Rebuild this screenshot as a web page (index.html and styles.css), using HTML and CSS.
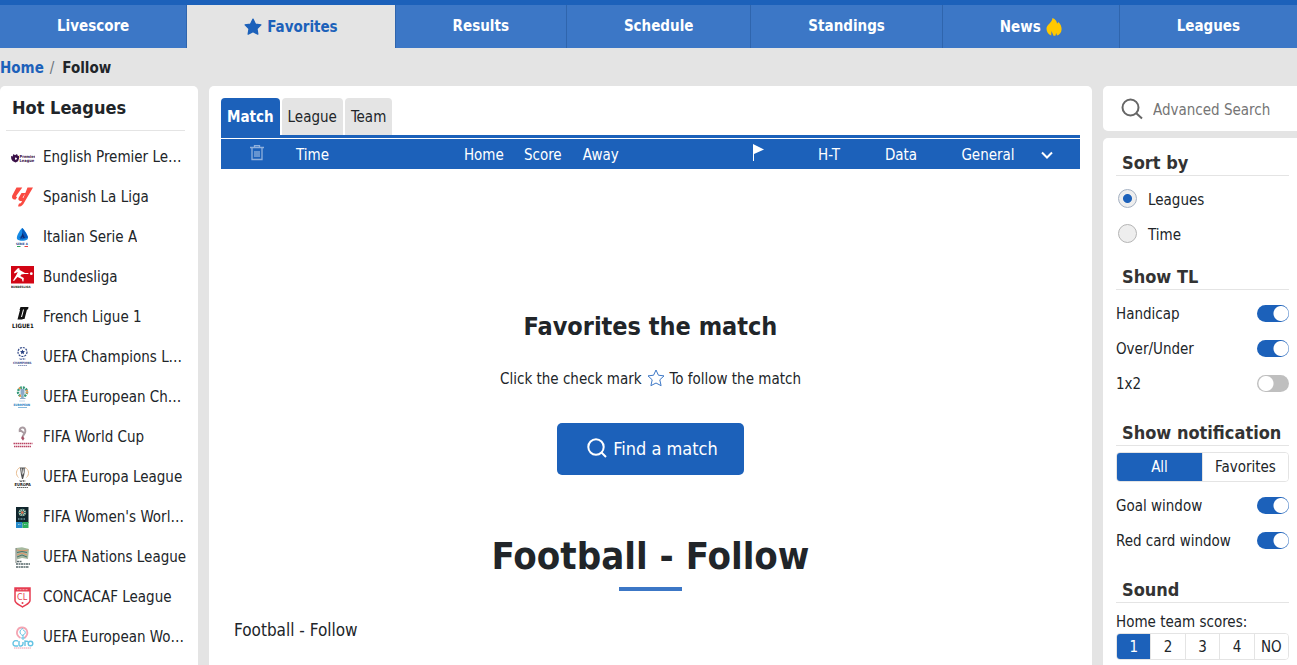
FILE: index.html
```
<!DOCTYPE html>
<html lang="en">
<head>
  <meta charset="UTF-8" />
  <meta name="viewport" content="width=device-width, initial-scale=1" />
  <title>Football - Follow</title>
  <link rel="stylesheet" href="styles.css">
</head>
<body>
  <nav class="main-nav">
    <a href="#">Livescore</a>
    <a href="#" class="active">
      <svg class="nav-star" viewBox="0 0 20 20"><path d="M10 1.2l2.7 5.5 6.1.9-4.4 4.3 1 6.1L10 15.2 4.6 18l1-6.1L1.2 7.6l6.1-.9z" fill="#1c61ba" stroke="#1c61ba" stroke-width="1.4" stroke-linejoin="round"/></svg>
      Favorites
    </a>
    <a href="#">Results</a>
    <a href="#">Schedule</a>
    <a href="#">Standings</a>
    <a href="#" class="news">
      News
      <svg class="nav-fire" viewBox="0 0 16 20"><path d="M6.500 1C9.500 2 11 4.500 11 6.500c.6-.3 1-.8 1.200-1.500 2.400 2 3.400 4.500 3.400 7 0 3.500-2 5.800-4.600 6.500l-.8-2.500-.8 2.800H7.500L5.500 14l-.3 4.500C2.500 17.500.5 15 .5 11.800.5 7.500 6 6 6.500 1z" fill="#ffc800"/></svg>
    </a>
    <a href="#">Leagues</a>
  </nav>

  <div class="breadcrumb">
    <a href="#">Home</a><span class="slash">/</span><span class="current">Follow</span>
  </div>

  <div class="layout">
    <aside class="leagues">
      <h2>Hot Leagues</h2>
      <ul>
        <li><a href="#">
          <svg viewBox="0 0 24 24"><path d="M0 11l1.500.5L2.500 9 4 10.300 6 9l.8 1.700 1.200.3v2.500l-1 2.700-2.500 1.200-3-1.500L.3 14z" fill="#3a1048"/><path d="M4 12.500l2 .5-.5 1.500-1.500.3z" fill="#fff"/><text x="8.500" y="13" font-size="4" font-weight="bold" fill="#3a1048">Premier</text><text x="8.500" y="16.500" font-size="4" font-weight="bold" fill="#3a1048">League</text></svg>
          <span>English Premier League</span></a></li>
        <li><a href="#">
          <svg viewBox="0 0 24 24"><path d="M5.500 2.500h5.800L5.500 10.500c-.6.900-.2 1.600.7 1.600L4.700 14.500C1.500 14.800.3 12.500 1.500 10z" fill="#fa4b42"/><path d="M16.500 2.500H22L13.500 17c-1.800 3.500-3.500 5-6.500 4.200l1-2.700c1 .3 1.800 0 2.300-1l.8-1.500c-2.600.5-4.600-1-3.300-3.500L10.500 8h4l-2.700 4.200c-.4.800.3 1.200.8.400z" fill="#fa4b42"/></svg>
          <span>Spanish La Liga</span></a></li>
        <li><a href="#">
          <svg viewBox="0 0 24 24"><path d="M11.300 3C13 4 16.500 9.500 17 12c.3 2-1 3.200-3 3.500-2 .3-4 .3-6-.3-2-.6-2.500-1.700-2-3.500C6.500 9.500 9.500 4 11.300 3z" fill="#168be5"/><path d="M11.300 3c1.800 2 5 7 5.700 9.500l-6 2-3-2.500 3-1z" fill="#0758bd"/><path d="M11.500 8l2.500 5h-1.700l-.8-1.500-2.500 3.500z" fill="#0e2b70"/><text x="5" y="19.500" font-size="3" font-weight="bold" fill="#153d86">SERIE A</text><path d="M6 21h3.500v1H6z" fill="#2ea35a"/><path d="M13.500 21H17v1h-3.500z" fill="#e44545"/></svg>
          <span>Italian Serie A</span></a></li>
        <li><a href="#">
          <svg viewBox="0 0 24 24"><path d="M0 1h23v17.500H0z" fill="#d20515"/><path d="M6.500 3.500l1.700-.5.500 2 5.300 3h3.500l-.2 1h-4l-3 .5-1 1.500 3.500 2-.3 3.500h-1l-.6-2.500L6.500 12 3 16l-1-.6L5.300 10l1.500-3-3.300 1.500L3 7.300z" fill="#fff"/><circle cx="20.300" cy="8.700" r="1.400" fill="#fff"/><text x="0" y="22.500" font-size="3" font-weight="bold" fill="#222">BUNDESLIGA</text></svg>
          <span>Bundesliga</span></a></li>
        <li><a href="#">
          <svg viewBox="0 0 24 24"><path d="M9.500 2h8L17 4.500h-1L13.500 14h-3L13 4.500h-1L10 12h2l-.5 2.500H6.500L9 5H8.500z" fill="#111"/><text x="1" y="22.500" font-size="6" font-weight="bold" fill="#111">LIGUE1</text></svg>
          <span>French Ligue 1</span></a></li>
        <li><a href="#">
          <svg viewBox="0 0 24 24"><circle cx="11.500" cy="7" r="4.500" fill="#fff" stroke="#314887" stroke-width="1.200" stroke-dasharray="2 1"/><path d="M11.500 4.500l.7 1.600 1.800.2-1.300 1.200.3 1.700-1.500-.9-1.500.9.300-1.700L9 6.300l1.800-.2z" fill="#263f80"/><path d="M9 13v1.500h2V13m1.500 0v2m0-1h2" stroke="#7f8eb8" fill="none"/><text x="2" y="19" font-size="3" font-weight="bold" fill="#314887">CHAMPIONS</text><path d="M7 20.500h9" stroke="#8b98bd" stroke-dasharray="1.500 .5"/></svg>
          <span>UEFA Champions League</span></a></li>
        <li><a href="#">
          <svg viewBox="0 0 24 24"><ellipse cx="11.500" cy="7" rx="4.500" ry="4.500" fill="none" stroke="#339979" stroke-width="2.400" stroke-dasharray="2 1"/><ellipse cx="11.500" cy="7" rx="4.500" ry="4.500" fill="none" stroke="#ef9750" stroke-width="2.400" stroke-dasharray="1.500 7"/><path d="M9.500 4h4v5l-1 1v3h2v1H9v-1h1.500v-3l-1-1z" fill="#8ca9c7"/><path d="M8.500 16h6" stroke="#86add3" stroke-dasharray="1 1"/><text x="2.500" y="20.500" font-size="3" font-weight="bold" fill="#1677bd">EUROPEAN</text><path d="M7 22.500h9" stroke="#88b9dd"/></svg>
          <span>UEFA European Championship</span></a></li>
        <li><a href="#">
          <svg viewBox="0 0 24 24"><path d="M8.800 7C7.500 1 15 1 14.300 6.500c-.3 2-2.300 3.500-2.800 5.500M9 5l4 3" fill="none" stroke="#a99ba1" stroke-width="2"/><path d="M10 13l1.500-2 2 2.300-1.500 2.500z" fill="#a55166"/><path d="M2.500 18.500h19M3 21.500h17" stroke="#ba4563" stroke-width="1.700" stroke-dasharray="1.500 .5"/></svg>
          <span>FIFA World Cup</span></a></li>
        <li><a href="#">
          <svg viewBox="0 0 24 24"><path d="M9 2.500a6 6 0 0 0-1.500 10M14 2.500a6 6 0 0 1 1.500 10" fill="none" stroke="#e8bd91"/><path d="M9 2.500h5.300L13.200 10 12 14h-1L10 10z" fill="#555"/><path d="M10.500 3.500l1 6M13 3.500l-.7 5" stroke="#ddd"/><path d="M9 15v1.500h2V15m1.500 0v2m0-1h2" stroke="#777" fill="none"/><text x="3.500" y="20.500" font-size="4" font-weight="bold" fill="#222">EUROPA</text><path d="M6 22.500h11" stroke="#666" stroke-dasharray="1.500 .5"/></svg>
          <span>UEFA Europa League</span></a></li>
        <li><a href="#">
          <svg viewBox="0 0 24 24"><path d="M5 2h12.500v16H5z" fill="#10252c"/><path d="M5 17h6.500v6H5z" fill="#268bcb"/><path d="M11.500 17h6v6h-6z" fill="#2cb05c"/><circle cx="11.300" cy="7.500" r="3.600" fill="#b9c9ae"/><path d="M11.300 3.500v8M7.300 7.500h8M8.700 5l5.300 5.200M14 5l-5.300 5.200" stroke="#29666a"/><circle cx="11.300" cy="7.500" r="1.300" fill="#ef7150"/><path d="M7 14h7M7 19.500h3M13 19.500h3" stroke="#9acbd0" stroke-dasharray="1 .5"/></svg>
          <span>FIFA Women's World Cup</span></a></li>
        <li><a href="#">
          <svg viewBox="0 0 24 24"><path d="M5 3l6-.7L18 4l-1 10-6-1-5 1.500z" fill="#a6b99f"/><path d="M6 5l5 1 6-1M6 10l5-2 5 2" stroke="#e59368" fill="none"/><path d="M6 7.500l5-1 5 1M6 12l5-2 5 2" stroke="#47716c" fill="none"/><path d="M5 3v15" stroke="#787e76"/><path d="M6 16.500h5M5 19h14M5 22h13" stroke="#57686b" stroke-width="1.500" stroke-dasharray="2 .5"/></svg>
          <span>UEFA Nations League</span></a></li>
        <li><a href="#">
          <svg viewBox="0 0 24 24"><path d="M4 3h15v12.500c0 3-4 4-7.500 6.500C8 19.500 4 18.500 4 15.500z" fill="#fff" stroke="#e63d51" stroke-width="1.500"/><path d="M4 3h15v3.500H4z" fill="#e63d51"/><path d="M6 4.700h11" stroke="#f7aeb6" stroke-dasharray="1 .5"/><text x="6" y="14.500" font-size="9" fill="#e63d51">CL</text><circle cx="11.500" cy="18" r="1" fill="#e63d51"/></svg>
          <span>CONCACAF League</span></a></li>
        <li><a href="#">
          <svg viewBox="0 0 24 24"><path d="M9.500 13C3 9 6.500 2.500 11 2.500S19 8 13.500 13" fill="none" stroke="#f4a5b2" stroke-width="1.800"/><path d="M12 3.500c-4 1-4 6 0 7M12 5c3 1 3 4 0 5M10 13h4M12 10v5" fill="none" stroke="#63bfe0"/><path d="M7 16c-6-2-6 5-3 5h3M8 16v4c0 2 4 1 4-1v-2M14 21v-5l3 .5" fill="none" stroke="#65c3e3" stroke-width="1.400"/><circle cx="19.500" cy="18.500" r="2.300" fill="none" stroke="#65c3e3" stroke-width="1.400"/><path d="M3 23h17" stroke="#ee9cac" stroke-dasharray="1.500 .5"/></svg>
          <span>UEFA European Women's Championship</span></a></li>
      </ul>
    </aside>

    <main class="content">
      <div class="tabs">
        <button class="active">Match</button>
        <button>League</button>
        <button>Team</button>
      </div>
      <table class="match-head">
        <thead>
          <tr>
            <th class="col-del"><svg width="16" height="16" viewBox="0 0 16 16"><path d="M1 2.500h14M5.500 2V.6h5V2M3 2.500v12h10v-12M6 6v6M8 6v6M10 6v6" fill="none" stroke="#8fb0dc" stroke-width="1.300"/></svg></th>
            <th class="col-time">Time</th>
            <th class="col-home">Home</th>
            <th class="col-score">Score</th>
            <th class="col-away">Away</th>
            <th class="col-corner"><svg width="12" height="18" viewBox="0 0 12 18"><path d="M1 0l11 5.500L2 10v7H1z" fill="#fff"/></svg></th>
            <th class="col-ht">H-T</th>
            <th class="col-data">Data</th>
            <th class="col-general">General</th>
            <th class="col-more"><svg width="14" height="10" viewBox="0 0 14 10"><path d="M2 2.500l5 5 5-5" fill="none" stroke="#fff" stroke-width="2"/></svg></th>
          </tr>
        </thead>
      </table>

      <section class="empty">
        <h2>Favorites the match</h2>
        <p>Click the check mark
          <svg width="18" height="20" viewBox="0 0 18 20"><path d="M9 1l2.400 5.200 5.600.7-4.200 3.900 1.300 5.900L9 14l-5.100 2.700 1.300-5.900L1 6.900l5.600-.7z" fill="none" stroke="#3c77c6" stroke-width="1" stroke-linejoin="round"/></svg>
          To follow the match</p>
        <button class="find">
          <svg width="20" height="22" viewBox="0 0 20 22"><circle cx="9" cy="9" r="7.700" fill="none" stroke="#fff" stroke-width="2"/><path d="M14.500 14.500l4.500 4.500" stroke="#fff" stroke-width="2"/></svg>
          Find a match
        </button>
      </section>

      <section class="about">
        <h1>Football - Follow</h1>
        <p>Football - Follow</p>
      </section>
    </main>

    <aside class="side">
      <label class="search">
        <svg width="22" height="22" viewBox="0 0 22 22"><circle cx="9.500" cy="9.500" r="8" fill="none" stroke="#666" stroke-width="2"/><path d="M15 15l6 5.500" stroke="#666" stroke-width="2"/></svg>
        <input type="text" placeholder="Advanced Search" aria-label="Advanced Search" />
      </label>

      <div class="settings">
        <h3>Sort by</h3>
        <label class="radio"><input type="radio" name="sort" checked />Leagues</label>
        <label class="radio"><input type="radio" name="sort" />Time</label>

        <h3>Show TL</h3>
        <label class="switch">Handicap<input type="checkbox" checked /></label>
        <label class="switch">Over/Under<input type="checkbox" checked /></label>
        <label class="switch">1x2<input type="checkbox" /></label>

        <h3 class="wide">Show notification</h3>
        <div class="group">
          <button class="on">All</button>
          <button>Favorites</button>
        </div>
        <label class="switch">Goal window<input type="checkbox" checked /></label>
        <label class="switch">Red card window<input type="checkbox" checked /></label>

        <h3 class="wide">Sound</h3>
        <p class="sound-label">Home team scores:</p>
        <div class="group small">
          <button class="on">1</button>
          <button>2</button>
          <button>3</button>
          <button>4</button>
          <button>NO</button>
        </div>
      </div>
    </aside>
  </div>
</body>
</html>
```
FILE: styles.css
```
* {
  box-sizing: border-box;
}
body {
  margin: 0;
  background: #e4e4e4;
  color: #212529;
  font-family: Tahoma, "DejaVu Sans Condensed", "Noto Sans", sans-serif;
  font-size: 15px;
  line-height: 20px;
}
a {
  color: inherit;
  text-decoration: none;
}
button,
input {
  font: inherit;
  color: inherit;
}
h1, h2, h3, p, ul {
  margin: 0;
  padding: 0;
}

/* top menu */
.main-nav {
  display: flex;
  height: 48px;
  border-top: 5px solid #1c61ba;
  background: #3c77c6;
}
.main-nav a {
  flex: 1 1 auto;
  display: flex;
  align-items: center;
  justify-content: center;
  gap: 5px;
  padding-bottom: 2px;
  border-right: 1px solid #2f65ad;
  color: #fff;
  font-size: 15px;
  font-weight: bold;
}
.main-nav a:last-child {
  border-right: 0;
}
.main-nav .active,
.main-nav .news {
  padding-bottom: 0;
}
.main-nav .active {
  background: #e4e4e4;
  color: #1c61ba;
}
.nav-star {
  width: 18px;
  height: 18px;
}
.nav-fire {
  width: 16px;
  height: 20px;
}
.breadcrumb {
  padding: 10px 0 8px;
  font-size: 15px;
  font-weight: bold;
}
.breadcrumb a {
  color: #1c61ba;
}
.slash {
  margin: 0 8px 0 6px;
  color: #6c757d;
  font-weight: normal;
}

.layout {
  display: grid;
  grid-template-columns: 198px 1fr 194px;
  gap: 11px;
}

/* left column */
.leagues {
  background: #fff;
  border-radius: 5px 5px 0 0;
}
.leagues h2 {
  margin: 0 13px 6px 6px;
  padding: 10px 6px;
  border-bottom: 1px solid #e4e4e4;
  font-size: 18px;
  line-height: 24px;
}
.leagues ul {
  list-style: none;
}
.leagues a {
  display: flex;
  align-items: center;
  gap: 8px;
  height: 40px;
  padding: 0 10px 0 11px;
}
.leagues svg {
  flex: none;
  width: 24px;
  height: 24px;
}
.leagues span {
  overflow: hidden;
  text-overflow: ellipsis;
  white-space: nowrap;
}

/* main block */
.content {
  padding: 12px 12px 24px;
  background: #fff;
  border-radius: 5px 5px 0 0;
}
.tabs {
  display: flex;
  gap: 2px;
  border-bottom: 3px solid #1c61ba;
}
.tabs button {
  height: 37px;
  padding: 0 6px;
  border: 0;
  border-radius: 4px 4px 0 0;
  background: #e4e4e4;
}
.tabs .active {
  background: #1c61ba;
  color: #fff;
  font-weight: bold;
}
.match-head {
  width: 100%;
  margin-top: 1px;
  table-layout: fixed;
  border-collapse: collapse;
  background: #1c61ba;
  color: #fff;
}
.match-head th {
  height: 30px;
  padding: 1px 0 0;
  font-weight: normal;
}
.match-head svg {
  display: block;
  margin: 0 auto;
}
.match-head .col-del { width: 72px; padding-bottom: 4px; }
.match-head .col-time { width: 44px; padding-left: 3px; text-align: left; }
.match-head .col-home { width: 20%; padding-right: 5px; text-align: right; }
.col-score { width: 68px; }
.match-head .col-away { padding-left: 6px; text-align: left; }
.match-head .col-corner { width: 82px; padding-bottom: 3px; }
.col-ht { width: 60px; }
.col-data { width: 84px; }
.col-general { width: 90px; }
.match-head .col-more { width: 47px; padding-right: 19px; }

.empty {
  padding: 142px 0 59px;
  text-align: center;
}
.empty h2 {
  font-size: 25px;
  line-height: 32px;
}
.empty p {
  display: flex;
  align-items: center;
  justify-content: center;
  gap: 5px;
  margin: 26px 0 34px;
}
.find {
  display: inline-flex;
  align-items: center;
  gap: 6px;
  height: 52px;
  padding: 0 26px 0 30px;
  border: 0;
  border-radius: 5px;
  background: #1c61ba;
  color: #fff;
  font-size: 18px;
}
.about h1 {
  font-size: 38px;
  line-height: 44px;
  text-align: center;
}
.about h1::after {
  content: "";
  display: block;
  width: 63px;
  height: 4px;
  margin: 9px auto 0;
  background: #3c77c6;
}
.about p {
  margin: 29px 13px 0;
  font-size: 17px;
}

/* right column */
.side {
  display: flex;
  flex-direction: column;
}
.search {
  display: flex;
  align-items: center;
  gap: 10px;
  height: 45px;
  padding: 0 8px 0 18px;
  background: #fff;
  border-radius: 5px 0 0 5px;
}
.search svg {
  flex: none;
}
.search input {
  width: 100%;
  min-width: 0;
  padding: 2px 0 0;
  border: 0;
  outline: 0;
}
.search input::placeholder {
  color: #757575;
}
.settings {
  flex: 1;
  margin-top: 7px;
  padding: 13px 8px 6px 13px;
  background: #fff;
  border-radius: 5px 0 0 0;
}
.settings h3 {
  margin: 13px 0 6px;
  padding: 0 6px;
  border-bottom: 1px solid #e4e4e4;
  color: #333;
  font-size: 18px;
  line-height: 24px;
  white-space: nowrap;
}
.settings h3:first-child {
  margin-top: 0;
}
.settings .wide {
  margin-top: 20px;
}
.radio,
.switch {
  display: flex;
  align-items: center;
  height: 35px;
}
.radio {
  gap: 11px;
}
.radio input {
  appearance: none;
  width: 19px;
  height: 19px;
  margin: 0 0 2px 2px;
  border: 1px solid #b5b5b5;
  border-radius: 50%;
  background: #eee;
}
.radio input:checked {
  border-color: #a5b1c2;
  background: radial-gradient(circle, #1c61ba 4px, #eee 5px);
}
.switch {
  justify-content: space-between;
}
.switch input {
  appearance: none;
  width: 32px;
  height: 17px;
  margin: 0;
  border-radius: 9px;
  background: radial-gradient(circle at 9px, #fff 7px, #bfbfbf 8px);
}
.switch input:checked {
  background: radial-gradient(circle at 24px, #fff 7px, #1c61ba 8px);
}
.group {
  display: flex;
  height: 30px;
  margin-bottom: 6px;
  border: 1px solid #e4e4e4;
  border-radius: 4px;
  overflow: hidden;
}
.group button {
  flex: 1;
  padding: 0;
  border: 0;
  background: #fff;
}
.group button + button {
  border-left: 1px solid #e4e4e4;
}
.group .on {
  background: #1c61ba;
  color: #fff;
}
.sound-label {
  padding-top: 3px;
  margin-bottom: 1px;
}
.small {
  height: 27px;
  margin-bottom: 0;
}
```
